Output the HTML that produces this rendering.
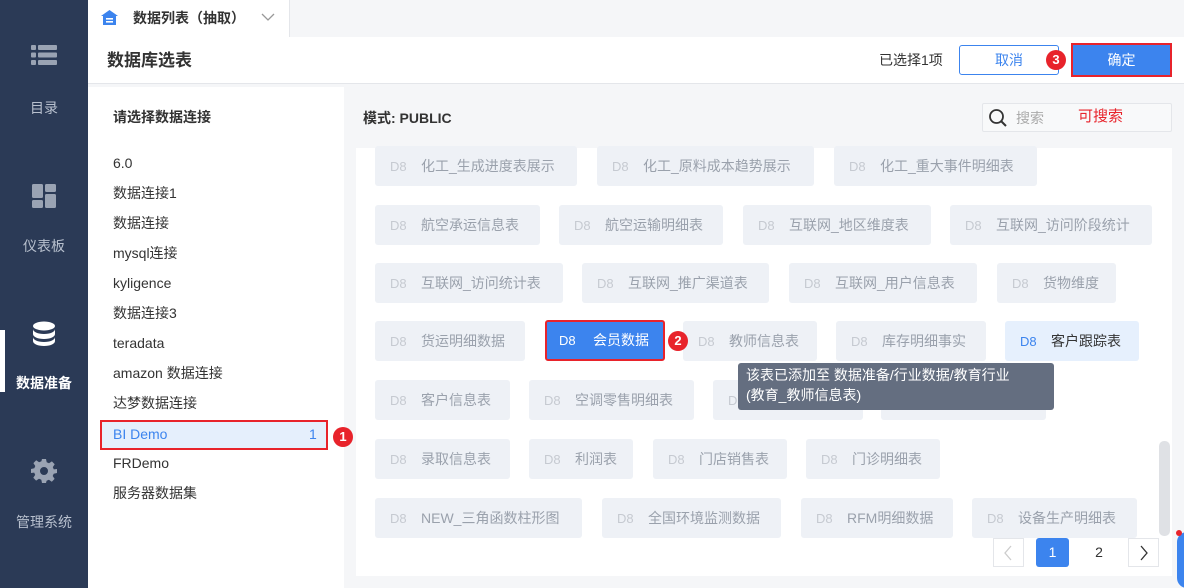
<!DOCTYPE html><html><head><meta charset="utf-8"><style>
*{margin:0;padding:0;box-sizing:border-box}
body{width:1184px;height:588px;overflow:hidden;background:#f5f6f8;font-family:"Liberation Sans","Noto Sans CJK SC",sans-serif;position:relative;color:#333}
.a{position:absolute}
.side{left:0;top:0;width:88px;height:588px;background:#2b3a56}
.nav{position:absolute;left:0;width:88px;text-align:center;color:#b8c0ce;font-size:14px;line-height:20px}
.t{position:absolute;height:40px;background:#eef1f6;border-radius:3px;color:#9aa1ac;font-size:14px;line-height:40px;white-space:nowrap}
.t b{font-weight:normal;color:#c6cad1;font-size:13px;display:inline-block;width:46px;padding-left:15px}
.li{position:absolute;left:113px;font-size:14px;color:#333;height:20px;line-height:20px}
.badge{position:absolute;width:20px;height:20px;border-radius:50%;background:#e8232b;color:#fff;font-size:13px;font-weight:bold;text-align:center;line-height:20px;z-index:5}
</style></head><body>
<div class="a side"></div>
<div class="a" style="left:0;top:330px;width:5px;height:62px;background:#fff"></div>
<div class="nav" style="top:44px"><svg width="26" height="22" viewBox="0 0 26 22"><g fill="#9aa3b3"><rect x="0" y="1" width="5" height="5" rx="1"/><rect x="7" y="1" width="19" height="5" rx="1"/><rect x="0" y="8.5" width="5" height="5" rx="1"/><rect x="7" y="8.5" width="19" height="5" rx="1"/><rect x="0" y="16" width="5" height="5" rx="1"/><rect x="7" y="16" width="19" height="5" rx="1"/></g></svg></div>
<div class="nav" style="top:98px">目录</div>
<div class="nav" style="top:184px"><svg width="24" height="24" viewBox="0 0 24 24"><g fill="#9aa3b3"><rect x="0" y="0" width="11" height="14" rx="1.5"/><rect x="13" y="0" width="11" height="8" rx="1.5"/><rect x="0" y="16" width="11" height="8" rx="1.5"/><rect x="13" y="10" width="11" height="14" rx="1.5"/></g></svg></div>
<div class="nav" style="top:236px">仪表板</div>
<div class="nav" style="top:321px"><svg width="26" height="26" viewBox="0 0 26 26"><g fill="#fff"><ellipse cx="13" cy="5" rx="11" ry="4.5"/><path d="M2 8c0 3 5 5 11 5s11-2 11-5v5c0 3-5 5-11 5S2 16 2 13z"/><path d="M2 16c0 3 5 5 11 5s11-2 11-5v4c0 3-5 5-11 5S2 23 2 20z"/></g></svg></div>
<div class="nav" style="top:373px;color:#fff;font-weight:bold">数据准备</div>
<div class="nav" style="top:458px"><svg width="26" height="26" viewBox="0 0 26 26"><path fill="#9aa3b3" fill-rule="evenodd" d="M11 1h4l.7 3.3 2.3 1 2.9-1.9 2.8 2.8-1.9 2.9 1 2.3L26 11v4l-3.3.7-1 2.3 1.9 2.9-2.8 2.8-2.9-1.9-2.3 1L15 25h-4l-.7-3.3-2.3-1-2.9 1.9-2.8-2.8 1.9-2.9-1-2.3L0 15v-4l3.3-.7 1-2.3-1.9-2.9 2.8-2.8 2.9 1.9 2.3-1zM13 9a4 4 0 100 8 4 4 0 000-8z"/></svg></div>
<div class="nav" style="top:512px">管理系统</div>

<div class="a" style="left:88px;top:0;width:202px;height:37px;background:#fff;border-right:1px solid #e4e6ea"></div>
<svg class="a" style="left:101px;top:10px" width="17" height="15" viewBox="0 0 17 15"><path d="M8.5 0L17 6H0z" fill="#3c84ee"/><rect x="2" y="5" width="13" height="10" fill="#3c84ee"/><rect x="5" y="8" width="7" height="1.6" fill="#fff"/><rect x="5" y="11" width="7" height="1.6" fill="#fff"/></svg>
<div class="a" style="left:133px;top:8px;font-size:14px;font-weight:bold;color:#333;line-height:20px">数据列表（抽取）</div>
<svg class="a" style="left:261px;top:13px" width="14" height="9"><path d="M1 1l6 6 6-6" stroke="#999" fill="none" stroke-width="1.3"/></svg>

<div class="a" style="left:88px;top:37px;width:1096px;height:47px;background:#fff;border-bottom:1px solid #e4e6ea"></div>
<div class="a" style="left:107px;top:49px;font-size:17px;font-weight:bold;color:#333;line-height:24px">数据库选表</div>
<div class="a" style="left:879px;top:50px;font-size:14px;color:#333;line-height:20px">已选择1项</div>
<div class="a" style="left:959px;top:45px;width:100px;height:30px;border:1px solid #3c84ee;border-radius:3px;color:#3c84ee;font-size:14px;text-align:center;line-height:28px">取消</div>
<div class="badge" style="left:1046px;top:50px">3</div>
<div class="a" style="left:1071px;top:43px;width:101px;height:34px;border:2px solid #e8232b;background:#3c84ee;color:#fff;font-size:14px;text-align:center;line-height:30px">确定</div>

<div class="a" style="left:88px;top:87px;width:256px;height:501px;background:#fff"></div>
<div class="a" style="left:113px;top:107px;font-size:14px;font-weight:bold;color:#333;line-height:20px">请选择数据连接</div>
<div class="li" style="top:153px">6.0</div>
<div class="li" style="top:183px">数据连接1</div>
<div class="li" style="top:213px">数据连接</div>
<div class="li" style="top:243px">mysql连接</div>
<div class="li" style="top:273px">kyligence</div>
<div class="li" style="top:303px">数据连接3</div>
<div class="li" style="top:333px">teradata</div>
<div class="li" style="top:363px">amazon 数据连接</div>
<div class="li" style="top:393px">达梦数据连接</div>
<div class="a" style="left:100px;top:420px;width:228px;height:30px;background:#e5effc;border:2px solid #e8232b"></div>
<div class="li" style="top:424px;color:#3c84ee">BI Demo</div>
<div class="a" style="left:309px;top:424px;font-size:14px;color:#3c84ee;line-height:20px">1</div>
<div class="badge" style="left:333px;top:427px">1</div>
<div class="li" style="top:453px">FRDemo</div>
<div class="li" style="top:483px">服务器数据集</div>

<div class="a" style="left:363px;top:108px;font-size:14px;font-weight:bold;color:#333;line-height:20px">模式: PUBLIC</div>
<div class="a" style="left:982px;top:103px;width:190px;height:29px;border:1px solid #e4e6ea;background:#f8f9fa;border-radius:2px"></div>
<svg class="a" style="left:988px;top:108px" width="20" height="20"><circle cx="8.5" cy="8.5" r="6.5" stroke="#333" stroke-width="1.8" fill="none"/><path d="M13 13l5 5" stroke="#333" stroke-width="2"/></svg>
<div class="a" style="left:1016px;top:108px;font-size:14px;color:#aaa;line-height:20px">搜索</div>
<div class="a" style="left:1078px;top:107px;font-size:15px;color:#e8232b;line-height:20px">可搜索</div>

<div class="a" style="left:356px;top:148px;width:816px;height:428px;background:#fff"></div>
<div class="a" style="left:1159px;top:441px;width:11px;height:95px;background:#dfe1e5;border-radius:5px"></div>

<div class="t" style="left:375px;top:146px;width:202px"><b>D8</b>化工_生成进度表展示</div>
<div class="t" style="left:597px;top:146px;width:217px"><b>D8</b>化工_原料成本趋势展示</div>
<div class="t" style="left:834px;top:146px;width:203px"><b>D8</b>化工_重大事件明细表</div>

<div class="t" style="left:375px;top:205px;width:165px"><b>D8</b>航空承运信息表</div>
<div class="t" style="left:559px;top:205px;width:164px"><b>D8</b>航空运输明细表</div>
<div class="t" style="left:743px;top:205px;width:188px"><b>D8</b>互联网_地区维度表</div>
<div class="t" style="left:950px;top:205px;width:202px"><b>D8</b>互联网_访问阶段统计</div>

<div class="t" style="left:375px;top:263px;width:188px"><b>D8</b>互联网_访问统计表</div>
<div class="t" style="left:582px;top:263px;width:187px"><b>D8</b>互联网_推广渠道表</div>
<div class="t" style="left:789px;top:263px;width:188px"><b>D8</b>互联网_用户信息表</div>
<div class="t" style="left:997px;top:263px;width:119px"><b>D8</b>货物维度</div>

<div class="t" style="left:375px;top:321px;width:150px"><b>D8</b>货运明细数据</div>
<div class="t" style="left:545px;top:320px;width:120px;height:41px;background:#3c84ee;color:#fff;border:2px solid #e8232b;line-height:37px"><b style="color:#fff;padding-left:12px">D8</b>会员数据</div>
<div class="t" style="left:683px;top:321px;width:134px"><b>D8</b>教师信息表</div>
<div class="badge" style="left:668px;top:331px">2</div>
<div class="t" style="left:836px;top:321px;width:150px"><b>D8</b>库存明细事实</div>
<div class="t" style="left:1005px;top:321px;width:134px;background:#e6f0fd;color:#333"><b style="color:#3c84ee">D8</b>客户跟踪表</div>

<div class="t" style="left:375px;top:380px;width:135px"><b>D8</b>客户信息表</div>
<div class="t" style="left:529px;top:380px;width:165px"><b>D8</b>空调零售明细表</div>
<div class="t" style="left:713px;top:380px;width:150px"><b>D8</b></div>
<div class="t" style="left:881px;top:380px;width:165px"></div>
<div class="a" style="left:738px;top:363px;width:316px;height:47px;background:#646e80;border-radius:3px;color:#fff;font-size:14px;line-height:20px;padding:2px 0 0 8px">该表已添加至 数据准备/行业数据/教育行业<br>(教育_教师信息表)</div>

<div class="t" style="left:375px;top:439px;width:135px"><b>D8</b>录取信息表</div>
<div class="t" style="left:529px;top:439px;width:104px"><b>D8</b>利润表</div>
<div class="t" style="left:653px;top:439px;width:134px"><b>D8</b>门店销售表</div>
<div class="t" style="left:806px;top:439px;width:134px"><b>D8</b>门诊明细表</div>

<div class="t" style="left:375px;top:498px;width:207px"><b>D8</b>NEW_三角函数柱形图</div>
<div class="t" style="left:602px;top:498px;width:179px"><b>D8</b>全国环境监测数据</div>
<div class="t" style="left:801px;top:498px;width:152px"><b>D8</b>RFM明细数据</div>
<div class="t" style="left:972px;top:498px;width:165px"><b>D8</b>设备生产明细表</div>

<div class="a" style="left:993px;top:538px;width:31px;height:29px;border:1px solid #e4e6ea;background:#fff"></div>
<svg class="a" style="left:1003px;top:545px" width="10" height="16"><path d="M8 1L2 8l6 7" stroke="#ccc" fill="none" stroke-width="1.3"/></svg>
<div class="a" style="left:1036px;top:538px;width:33px;height:29px;background:#3c84ee;border-radius:3px;color:#fff;font-size:14px;text-align:center;line-height:29px">1</div>
<div class="a" style="left:1084px;top:538px;width:30px;height:29px;color:#333;font-size:14px;text-align:center;line-height:29px">2</div>
<div class="a" style="left:1128px;top:538px;width:31px;height:29px;border:1px solid #e4e6ea;background:#fff"></div>
<svg class="a" style="left:1139px;top:545px" width="10" height="16"><path d="M2 1l6 7-6 7" stroke="#333" fill="none" stroke-width="1.3"/></svg>
<div class="a" style="left:1177px;top:532px;width:20px;height:56px;background:#3c84ee;border-radius:10px"></div>
<div class="a" style="left:1176px;top:530px;width:6px;height:6px;border-radius:50%;background:#e8232b"></div>
</body></html>
